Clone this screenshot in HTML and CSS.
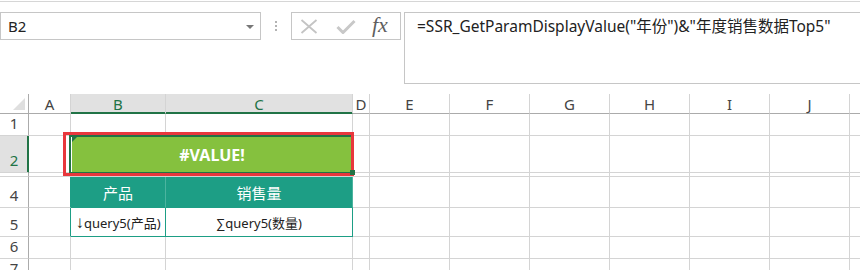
FILE: index.html
```html
<!DOCTYPE html>
<html lang="zh-CN">
<head>
    <meta charset="UTF-8">
    <meta name="viewport" content="width=device-width, initial-scale=1.0">
    <title>年度销售数据</title>
    <link rel="stylesheet" href="styles.css">
</head>
<body>

    <!-- Name box + formula bar -->
    <div class="toolbar">
        <div class="namebox">
            <span>B2</span>
            <i class="caret"></i>
        </div>
        <div class="grip"><i></i><i></i><i></i></div>
        <div class="fbuttons">
            <svg class="icon-cancel" width="18" height="15" viewBox="0 0 18 15">
                <path d="M1.5 1 L16.5 14 M16.5 1 L1.5 14" stroke="#c4c4c4" stroke-width="1.8" fill="none"/>
            </svg>
            <svg class="icon-enter" width="20" height="15" viewBox="0 0 20 15">
                <path d="M1.5 8 L7 13.5 L18.5 2" stroke="#c8c8c8" stroke-width="3" fill="none"/>
            </svg>
            <span class="fx">fx</span>
        </div>
        <div class="formula">=SSR_GetParamDisplayValue("年份")&amp;"年度销售数据Top5"</div>
    </div>

    <!-- Worksheet grid, filled by the script below -->
    <div class="sheet" id="sheet"></div>

    <script>
        // last column is the partly visible one past J, left without a label
        const colNames = ['', 'A', 'B', 'C', 'D', 'E', 'F', 'G', 'H', 'I', 'J', ''];
        const rowNames = ['', '1', '2', '3', '4', '5', '6', '7'];
        const selectedCols = ['B', 'C'];
        const selectedRow = '2';
        const hiddenRow = '3';

        // Cells that hold something
        const content = {
            B2: { html: '#VALUE!', cls: 'merged', skip: 'C2' },
            B4: { html: '产品', cls: 'th' },
            C4: { html: '销售量', cls: 'th' },
            B5: { html: '<span class="sym arrow">↓</span>query5(产品)', cls: 'td' },
            C5: { html: '<span class="sym">∑</span>query5(数量)', cls: 'td' }
        };
        const skipped = Object.values(content).map(c => c.skip).filter(Boolean);

        const sheet = document.getElementById('sheet');

        rowNames.forEach((row, r) => {
            colNames.forEach((col, c) => {
                const ref = col + row;
                if (skipped.includes(ref)) return;

                const cell = document.createElement('div');
                cell.classList.add('cell');

                if (r === 0 && c === 0) {
                    cell.classList.add('corner');
                    cell.innerHTML = '<i class="corner-tri"></i>';
                } else if (r === 0) {
                    cell.classList.add('col-head');
                    cell.textContent = col;
                    if (selectedCols.includes(col)) cell.classList.add('selected');
                } else if (c === 0) {
                    cell.classList.add('row-head');
                    if (row !== hiddenRow) cell.textContent = row;
                    if (row === selectedRow) cell.classList.add('selected');
                } else {
                    const data = content[ref];
                    if (data) {
                        cell.classList.add(data.cls);
                        cell.innerHTML = '<span>' + data.html + '</span>';
                    }
                    // left edge of the little table
                    if (col === 'A' && (row === '4' || row === '5')) cell.classList.add('table-edge');
                }

                if (ref === 'B2') {
                    cell.insertAdjacentHTML('afterbegin',
                        '<span class="sel"></span><span class="mark"></span><span class="handle"></span>');
                }
                sheet.appendChild(cell);
            });
        });
    </script>
</body>
</html>
```

FILE: styles.css
```css
body {
    margin: 0;
    font-family: 'Noto Sans', 'Noto Sans CJK SC', sans-serif;
    color: #222;
    background: #fff;
    overflow: hidden;
}

/* ---------- formula bar ---------- */
.toolbar {
    display: flex;
    align-items: flex-start;
    margin-top: 1px;
    border-top: 1px solid #d6d6d6;
    padding-top: 10px;
}

.namebox {
    box-sizing: border-box;
    width: 261px;
    height: 28px;
    border: 1px solid #c6c6c6;
    display: flex;
    align-items: center;
    padding: 0 6px 0 7px;
    font-size: 15px;
    flex: none;
}

.caret {
    margin-left: auto;
    width: 0;
    height: 0;
    border-left: 4px solid transparent;
    border-right: 4px solid transparent;
    border-top: 4px solid #777;
    margin-top: 1px;
}

.grip {
    display: flex;
    flex-direction: column;
    gap: 2px;
    margin: 9px 0 0 14px;
    flex: none;
}

.grip i {
    width: 2px;
    height: 2px;
    background: #b3b3b3;
}

.fbuttons {
    box-sizing: border-box;
    width: 110px;
    height: 28px;
    margin-left: 14px;
    border: 1px solid #c6c6c6;
    display: flex;
    align-items: center;
    padding-left: 8px;
    flex: none;
}

.icon-enter {
    margin-left: 18px;
}

.fx {
    margin-left: 16px;
    font-family: 'Liberation Serif', serif;
    font-style: italic;
    font-size: 22px;
    line-height: 1;
    color: #5f5f5f;
    margin-top: -3px;
}

.formula {
    box-sizing: border-box;
    flex: none;
    width: 480px;
    height: 72px;
    margin-left: 3px;
    border: 1px solid #c6c6c6;
    padding: 3px 0 0 12px;
    font-size: 15.5px;
    line-height: 20px;
    white-space: nowrap;
}

/* ---------- worksheet ---------- */
.sheet {
    display: grid;
    grid-template-columns: 29px 42px 95px 187px 17px repeat(7, 80px);
    grid-template-rows: 20px 22px 37px 4px 31px 29px 22px 22px;
    margin-top: 10px;
}

.cell {
    box-sizing: border-box;
    border-right: 1px solid #d4d4d4;
    border-bottom: 1px solid #d4d4d4;
    display: flex;
    align-items: center;
    justify-content: center;
    font-size: 15px;
    white-space: nowrap;
}

.corner {
    border-right-color: #ababab;
    border-bottom-color: #ababab;
    justify-content: flex-end;
    align-items: flex-end;
    padding: 0 3px 3px 0;
}

.corner-tri {
    width: 0;
    height: 0;
    border-left: 12px solid transparent;
    border-bottom: 12px solid #dfdfdf;
}

.col-head {
    border-bottom-color: #ababab;
    color: #444;
}

.col-head.selected {
    background: #e1e1e1;
    color: #217346;
    border-bottom-color: #217346;
    box-shadow: inset 0 -1px 0 #217346;
}

.row-head {
    border-right-color: #ababab;
    color: #444;
    align-items: flex-end;
    padding-bottom: 2px;
}

.row-head.selected {
    background: #e1e1e1;
    color: #217346;
    border-right-color: #217346;
    box-shadow: inset -1px 0 0 #217346;
}

/* merged B2:C2 with the error value */
.merged {
    grid-column: span 2;
    position: relative;
    border: none;
    background: #85c13e;
    box-shadow: inset 0 0 0 1px #fff;
    color: #fff;
    font-weight: bold;
    font-size: 16px;
}

.merged::before {
    content: '';
    position: absolute;
    left: 1px;
    top: 1px;
    border-top: 5px solid #217346;
    border-right: 5px solid transparent;
}

.sel {
    position: absolute;
    left: -2px;
    top: -1px;
    right: -1px;
    bottom: -1px;
    border: 2px solid #217346;
}

.mark {
    position: absolute;
    left: -8px;
    top: -4px;
    width: 291px;
    height: 44px;
    box-sizing: border-box;
    border: 3px solid #e8373c;
}

.handle {
    position: absolute;
    left: 279px;
    top: 34px;
    width: 5px;
    height: 5px;
    background: #217346;
}

/* the small report table */
.th {
    background: #1d9e85;
    color: #fff;
    border-right-color: #4cb49f;
    border-bottom-color: #1d9e85;
}

.td {
    font-size: 13px;
    color: #222;
    border-right-color: #1d9e85;
    border-bottom-color: #1d9e85;
}

.sym {
    font-family: 'Liberation Sans', sans-serif;
}

.sym.arrow {
    font-size: 17px;
    line-height: 1;
}

.table-edge {
    border-right-color: #1d9e85;
}
```
